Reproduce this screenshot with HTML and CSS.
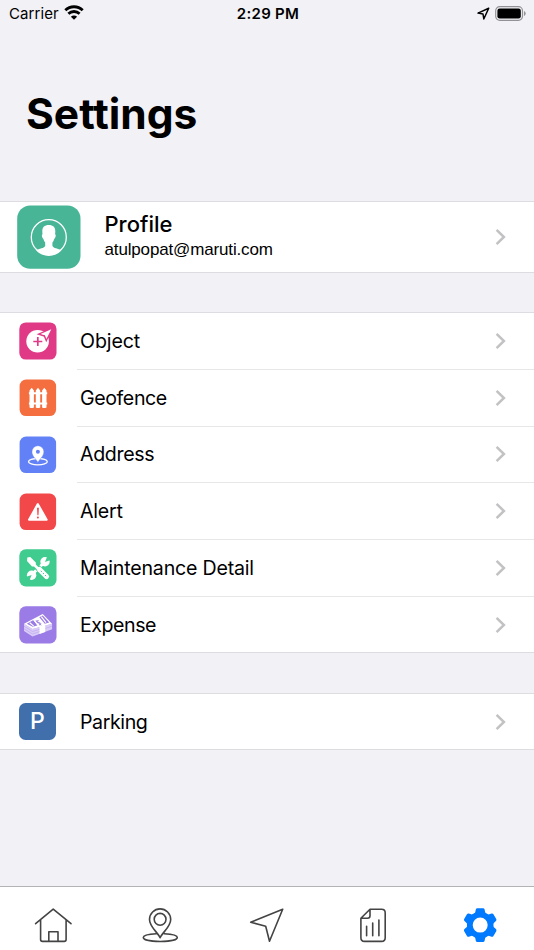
FILE: index.html
```html
<!DOCTYPE html>
<html lang="en">
<head>
<meta charset="utf-8">
<title>Settings</title>
<link rel="stylesheet" href="styles.css">
</head>
<body>
<svg class="defs" width="0" height="0"><defs>
  <symbol id="chevron" viewBox="0 0 12 18"><path d="M1.6 1.900 8.900 9l-7.300 7.100" fill="none" stroke="#c2c2c5" stroke-width="2.500"/></symbol>
</defs></svg>
<div class="screen">
  <header class="status">
    <div class="status-left"><span class="carrier">Carrier</span>
      <svg width="20" height="15" viewBox="0 0 20 15"><g fill="none" stroke="#000" stroke-width="2.8"><path d="M1.3 5.3a12.4 12.4 0 0 1 17.4 0"/><path d="M4.4 8.8a8 8 0 0 1 11.2 0"/></g><path d="M10 14.8 6.9 11.700a4.4 4.4 0 0 1 6.2 0z"/></svg>
    </div>
    <div class="clock">2:29 PM</div>
    <div class="status-right">
      <svg width="13" height="13" viewBox="0 0 13 13"><path d="M11.7 1.2 1 6.1l5 .9.8 5z" fill="none" stroke="#000" stroke-width="1.5" stroke-linejoin="round"/></svg>
      <svg width="32" height="15" viewBox="0 0 32 15"><rect x=".7" y=".7" width="26.8" height="13.6" rx="4" fill="none" stroke="#929295" stroke-width="1.2"/><rect x="2.4" y="2.4" width="23.4" height="10.2" rx="2.3"/><path d="M29 5v5q1.7-.7 1.7-2.5T29 5z" fill="#929295"/></svg>
    </div>
  </header>
  <h1 class="title">Settings</h1>

  <main>
    <section class="group profile">
      <svg class="avatar" width="64" height="64" viewBox="0 0 64 64"><rect x=".2" y=".4" width="63.3" height="63.3" rx="13" fill="#48b596"/><circle cx="31.8" cy="32.2" r="17.5" fill="none" stroke="#fff" stroke-width="1.3"/><path d="M31.8 20c4.400 0 6.600 2.400 6.500 6.200 0 1.300-.1 2-.2 3 .9.300.8 2.200-.1 3.800-.5.800-.9.900-1.100 1.800-.2 1-.7 1.900-1.500 2.800v3.200c.4 2.600 6.400 2.800 9 4.700a17.300 17.300 0 0 1-25.200 0c2.600-1.900 8.600-2.100 9-4.700v-3.200c-.8-.9-1.300-1.800-1.500-2.800-.2-.9-.6-1-1.100-1.800-.9-1.600-1-3.500-.1-3.800-.1-1-.2-1.700-.2-3C25.200 22.400 27.400 20 31.800 20z" fill="#fff"/></svg>
      <div class="who"><div class="name">Profile</div><div class="email">atulpopat@maruti.com</div></div>
      <svg class="chev"><use href="#chevron"/></svg>
    </section>

    <section class="group list">
      <div class="row">
        <svg class="icon" viewBox="0 0 38 38"><rect x=".3" y=".4" width="37.2" height="37.2" rx="6.500" fill="#e03a87"/><circle cx="18.600" cy="19.300" r="11.300" fill="#fff"/><path d="M32.300 7.200 20.500 12.100l5 1.600 1.800 4.200z" fill="#fff" stroke="#e03a87" stroke-width="2"/><path d="M32.300 7.200 21.500 11.900l4.500 1.400 1.400 3.700z" fill="#fff"/><path d="M18.800 15v9M14.300 19.500h9" stroke="#e03a87" stroke-width="1.700"/></svg>
        <div class="cell"><span class="obj">Object</span><svg class="chev"><use href="#chevron"/></svg></div>
      </div>
      <div class="row">
        <svg class="icon" viewBox="0 0 38 38"><rect x=".6" y=".6" width="36.500" height="36.500" rx="6.500" fill="#f46e3f"/><g fill="#fff"><path d="M10.500 11.500 12.700 8.800l2.200 2.700v16.900q-2.200 1.400-4.400 0zM16.800 11.500l2.200-2.700 2.200 2.700v16.900q-2.200 1.400-4.400 0zM23.100 11.500l2.200-2.700 2.200 2.700v16.900q-2.200 1.400-4.400 0z"/><path d="M9.900 13.300h18.300v2H9.900zM9.900 23.600h18.300v2H9.900z"/></g></svg>
        <div class="cell"><span class="geo">Geofence</span><svg class="chev"><use href="#chevron"/></svg></div>
      </div>
      <div class="row">
        <svg class="icon" viewBox="0 0 38 38"><rect x=".6" y=".6" width="36.500" height="36.500" rx="6.500" fill="#6281f7"/><ellipse cx="18.900" cy="25.700" rx="9.400" ry="3.200" fill="none" stroke="#fff" stroke-width="1.300"/><path d="M18.900 26.500c-1.200-3-6-6-6-10.800a6 6 0 0 1 12 0c0 4.800-4.800 7.800-6 10.800z" fill="#fff" stroke="#6281f7" stroke-width=".5"/><circle cx="18.900" cy="15.700" r="2" fill="#6281f7"/></svg>
        <div class="cell"><span class="addr">Address</span><svg class="chev"><use href="#chevron"/></svg></div>
      </div>
      <div class="row">
        <svg class="icon" viewBox="0 0 38 38"><rect x=".6" y=".6" width="36.500" height="36.500" rx="6.500" fill="#f34849"/><path d="M18.800 11 10 26.700h17.700z" fill="#fff" stroke="#fff" stroke-width="2" stroke-linejoin="round"/><path d="M18 14.700h1.900l-.4 7.500h-1.100z" fill="#f34849"/><circle cx="18.900" cy="24.500" r="1" fill="#f34849"/></svg>
        <div class="cell"><span class="alrt">Alert</span><svg class="chev"><use href="#chevron"/></svg></div>
      </div>
      <div class="row">
        <svg class="icon raised" viewBox="0 0 38 38"><rect x=".3" y=".3" width="37.200" height="37.200" rx="6.500" fill="#40cb8f"/><path d="M12 26.500 26.500 12.200" stroke="#fff" stroke-width="3"/><circle cx="26" cy="12.800" r="4.700" fill="#fff"/><path d="m26 13 2.500-6.200 4 4z" fill="#40cb8f"/><circle cx="12.600" cy="26.300" r="4.700" fill="#fff"/><path d="m12.600 26.100-6.500 2.200 4 4z" fill="#40cb8f"/><path d="m11 11 17 17" stroke="#40cb8f" stroke-width="6"/><path d="m8.300 8.600 3-.5 5.500 5.400v2.100l4 4-1.800 1.800-4-4H13L8 12z" fill="#fff"/><path d="m20.500 20.500 7 7" stroke="#fff" stroke-width="5.200" stroke-linecap="round"/><path d="m21.800 21.800 5.500 5.500" stroke="#40cb8f" stroke-width="1" stroke-dasharray="1.500 1.500"/></svg>
        <div class="cell"><span class="maint">Maintenance Detail</span><svg class="chev"><use href="#chevron"/></svg></div>
      </div>
      <div class="row">
        <svg class="icon" viewBox="0 0 38 38"><rect x=".3" y=".3" width="37.200" height="37.200" rx="6.500" fill="#9b7be5"/><path d="M5 17.700 13.500 23v7.500L5 25zM13.500 23l19.600-5.200v5.500l-19.600 7.200z" fill="#d9ccf7"/><path d="M5 17.700 23.700 7.900l9.400 9.900L13.500 23z" fill="#fff"/><path d="m7.800 17.700 6.600-3.600 3.900 5.300-4.700 1.300zM20.300 11.300l3.500-1.700 6.400 7-4.400 1.200z" fill="#9b7be5"/><path d="m14.200 14.200 4.500-2.500 7.500 7.700v6.500l-5.700 2.200V21z" fill="#fff"/><path d="m10.700 16.700 4 3.400M22.300 10.700l4.700 6" stroke="#fff" stroke-width="1.200"/><path d="M19.700 14.700c-3-.4-2.600 2.200 0 2s3 2.400.3 2M17 14.300l5 5" fill="none" stroke="#9b7be5" stroke-width="1"/><path d="m5 20.200 8.500 5.300 7-2.100M5 22.700l8.500 5.300 7-2.400m6-3.200 6.600-2.300" fill="none" stroke="#b8a1ee" stroke-width=".6"/></svg>
        <div class="cell"><span class="exp">Expense</span><svg class="chev"><use href="#chevron"/></svg></div>
      </div>
    </section>

    <section class="group list">
      <div class="row">
        <div class="parking-icon">P</div>
        <div class="cell"><span class="park">Parking</span><svg class="chev"><use href="#chevron"/></svg></div>
      </div>
    </section>
  </main>

  <nav class="tabs">
    <a><svg class="tab" viewBox="0 0 40 40"><path d="M2.600 18.700 20.200 4.200 38 18.700M7.600 15v19.500q0 1.900 1.900 1.900h21.700q1.900 0 1.900-1.900V15M15.800 36V26.700H25V36"/></svg></a>
    <a><svg class="tab" viewBox="0 0 40 40"><path d="M20.100 32.700C18 27.500 9.500 22 9.500 14.500a10.600 10.600 0 0 1 21.200 0c0 7.500-8.500 13-10.600 18.200z"/><circle cx="20.100" cy="14.300" r="5.900"/><path d="M16.300 28.700c-7.500.4-13 1.700-13 3.800 0 2.300 6.500 4 17 4s17-1.700 17-4c0-2.100-5.500-3.400-13-3.800"/></svg></a>
    <a><svg class="tab" viewBox="0 0 40 40"><path d="M35.700 4.300 3.700 17.200l15 4 3.800 15z"/></svg></a>
    <a><svg class="tab" viewBox="0.500 0 40 40"><path d="M16.500 4.300h11.600q3.600 0 3.600 3.600v24.900q0 3.600-3.600 3.600H11q-3.600 0-3.600-3.600V13.300zM16.500 4.300v6.500q0 2.500-2.500 2.500H7.400M13.100 21.300v9.400M19.200 18v12.700M25.400 15v15.700"/></svg></a>
    <a><svg class="tab gear" viewBox="0.400 0 40 40"><defs><path id="tooth" d="M13.300 9.300 14.600 7.500 15.200 4.500q.3-1.300 1.600-1.300h5.600q1.300 0 1.600 1.300l.6 3 1.300 1.800z"/></defs><circle cx="19.600" cy="20.100" r="10.400" stroke="#007aff" stroke-width="5.800" fill="none"/><g fill="#007aff"><use href="#tooth"/><use href="#tooth" transform="rotate(60 19.600 20.100)"/><use href="#tooth" transform="rotate(120 19.600 20.100)"/><use href="#tooth" transform="rotate(180 19.600 20.100)"/><use href="#tooth" transform="rotate(240 19.600 20.100)"/><use href="#tooth" transform="rotate(300 19.600 20.100)"/></g></svg></a>
  </nav>
</div>
</body>
</html>
```
FILE: styles.css
```css
* { box-sizing: border-box; }
body { margin: 0; font-family: Inter, Roboto, sans-serif; color: #000; background: #f2f1f6; }
svg { display: block; flex: none; }
.defs { position: absolute; }
.screen { width: 534px; height: 950px; display: flex; flex-direction: column; overflow: hidden; }

.status { height: 28px; display: grid; grid-template-columns: 1fr auto 1fr; align-items: center; padding: 0 7px 0 9px; font-size: 15px; line-height: 28px; }
.status-left, .status-right { display: flex; align-items: center; gap: 5px; }
.status-left svg { margin-top: -3px; }
.status-right { justify-content: flex-end; margin-top: -2px; }
.carrier { letter-spacing: 0.1px; }
.clock { font-weight: 600; letter-spacing: 0.300px; }

.title { margin: 59px 0 0 26px; height: 114px; line-height: 54px; font-size: 42.500px; font-weight: 700; letter-spacing: 0; }

.group { background: #fff; border-top: 1px solid #dddce1; border-bottom: 1px solid #dddce1; margin-bottom: 39.500px; }
.profile { height: 71.500px; display: flex; align-items: center; padding: 0 27px 0 17px; }
.who { margin-left: 23.500px; flex: 1; padding-top: 2px; }
.name { font-size: 22px; line-height: 25px; font-weight: 500; letter-spacing: 0; margin-top: -1px; }
.email { font-family: "Liberation Sans", sans-serif; font-size: 17px; line-height: 26px; letter-spacing: -0.15px; }
.chev { width: 12px; height: 18px; }

.row { height: 56.800px; display: flex; align-items: center; padding-left: 19px; }
.icon { width: 38px; height: 38px; }
.raised { margin-top: -1px; }
.cell { flex: 1; height: 100%; margin-left: 20px; padding: 0 27px 0 3px; display: flex; align-items: center; justify-content: space-between; font-size: 19.600px; border-bottom: 1px solid #e7e7e9; }
.row:last-child .cell { border-bottom: 0; }
.row:last-child { height: 55.500px; }
.obj { letter-spacing: -0.1px; }
.geo { letter-spacing: -0.4px; }
.addr { letter-spacing: -0.350px; }
.alrt, .maint { letter-spacing: -0.200px; }
.exp { letter-spacing: -0.450px; }
.park { letter-spacing: -0.400px; }
.parking-icon { width: 37px; height: 37px; margin-right: 1px; border-radius: 6.500px; background: #406fab; color: #fff; display: grid; place-items: center; font-size: 23px; font-weight: 500; line-height: 1; }

.tabs { margin-top: auto; height: 64px; border-top: 1px solid #b3b3b7; background: #fff; display: grid; grid-template-columns: repeat(5, 1fr); padding-top: 18px; }
.tabs a { display: flex; justify-content: center; }
.tab { width: 40px; height: 40px; fill: none; stroke: #444; stroke-width: 1.600; stroke-linejoin: round; stroke-linecap: round; }
.gear { stroke: none; }
```
